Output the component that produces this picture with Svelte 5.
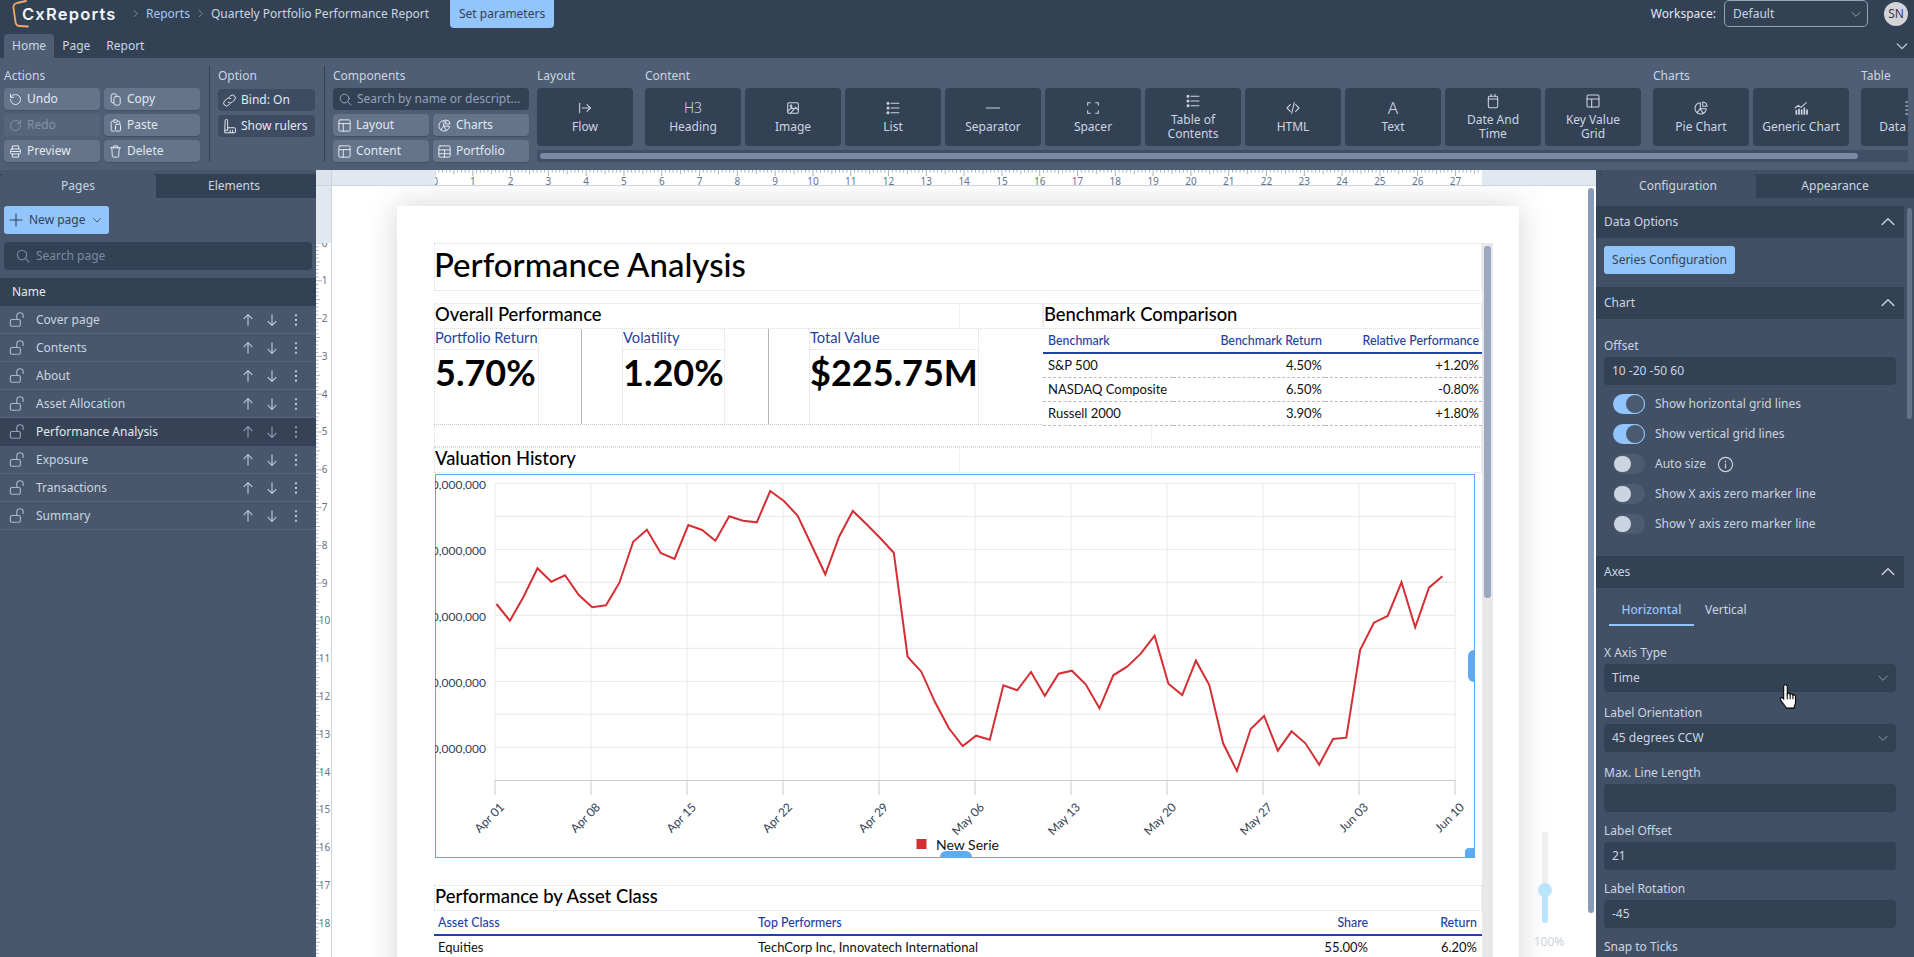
<script>
  const I = {
    undo: '<path d="M4 12a8 8 0 1 0 8-8 8.5 8.5 0 0 0-6 2.5L4 8.5"/><path d="M4 3.5v5h5"/>',
    redo: '<path d="M20 12a8 8 0 1 1-8-8 8.5 8.5 0 0 1 6 2.5l2 2"/><path d="M20 3.5v5h-5"/>',
    copy: '<rect x="9.5" y="7" width="10" height="14" rx="3"/><path d="M9.5 17.5H8a3 3 0 0 1-3-3V6a3 3 0 0 1 3-3h3a3 3 0 0 1 3 3v1"/>',
    paste: '<path d="M9 5H7a2 2 0 0 0-2 2v12a2 2 0 0 0 2 2h3"/><path d="M15 5h2a2 2 0 0 1 2 2v2"/><rect x="9" y="3" width="6" height="4" rx="1"/><rect x="12" y="10" width="8" height="11" rx="2"/>',
    print: '<path d="M7 8V3h10v5"/><rect x="4" y="8" width="16" height="8" rx="2"/><path d="M4 12h16"/><path d="M7 16v5h10v-5"/>',
    trash: '<path d="M4 6h16"/><path d="M9 6V3h6v3"/><path d="M6 6l1 14a1.5 1.5 0 0 0 1.5 1h7a1.5 1.5 0 0 0 1.5-1l1-14"/>',
    link: '<path d="M10 15a4.5 4.5 0 0 0 6 0l4-4a4.5 4.5 0 0 0-6.4-6.4l-1.5 1.5"/><path d="M14 9a4.5 4.5 0 0 0-6 0l-4 4a4.5 4.5 0 0 0 6.4 6.4l1.5-1.5"/>',
    ruler: '<path d="M5 2.5a2 2 0 0 1 4 0V14h11a1.5 1.5 0 0 1 1.5 1.5V21a1 1 0 0 1-1 1H5z"/><path d="M9 14v3M13 18v4M17 18v4M5 18h4"/>',
    layout: '<rect x="3" y="3" width="18" height="18" rx="2"/><path d="M3 9h18M10 9v12"/>',
    grid: '<rect x="3" y="3" width="18" height="18" rx="2"/><path d="M3 9.5h18M3 15.5h18M12 9.5V21"/>',
    pie: '<path d="M11 4a8.5 8.5 0 1 0 9 9h-9z"/><path d="M14.5 3a7 7 0 0 1 6.5 6.500h-6.500z"/><path d="M11 13l-5 6M11 13l4 7"/>',
    flow: '<path d="M4 5v14"/><path d="M8 12h12"/><path d="M15 7l5 5-5 5"/>',
    image: '<rect x="4" y="4" width="16" height="16" rx="2"/><circle cx="9" cy="9" r="1.3"/><path d="M4 17l6-6 3 3 3-3 4 4M8 20l8-9"/>',
    list: '<path d="M9 5h12M9 12h12M9 19h12"/><circle cx="4.500" cy="5" r="1.500" fill="currentColor"/><circle cx="4.500" cy="12" r="1.500" fill="currentColor"/><circle cx="4.500" cy="19" r="1.500" fill="currentColor"/>',
    sep: '<path d="M2 12h20"/>',
    spacer: '<path d="M4 8V4h4M16 4h4v4M20 16v4h-4M8 20H4v-4"/>',
    html: '<path d="M8 7l-5 5 5 5M16 7l5 5-5 5M14 4l-4 16"/>',
    date: '<rect x="5" y="5" width="14" height="17" rx="2"/><path d="M9 2v3M15 2v3M5 9h14"/>',
    bars: '<path d="M3 12l5-4 4 3 8-7"/><path d="M5 21v-5M9 21v-7M13 21v-6M17 21v-9M21 21v-6" stroke-width="2.600"/>',
    table: '<path d="M7 3h12v18H7M7 9h12M7 15h12"/>',
    search: '<circle cx="10.500" cy="10.500" r="7"/><path d="M16 16l5 5"/>',
    plus: '<path d="M12 3v18M3 12h18"/>',
    down: '<path d="M5 9l7 7 7-7"/>',
    up: '<path d="M5 15l7-7 7 7"/>',
    aup: '<path d="M12 20V4M6 10l6-6 6 6"/>',
    adown: '<path d="M12 4v16M6 14l6 6 6-6"/>',
    more: '<circle cx="12" cy="5" r=".9" fill="currentColor"/><circle cx="12" cy="12" r=".9" fill="currentColor"/><circle cx="12" cy="19" r=".9" fill="currentColor"/>',
    lock: '<rect x="2" y="12" width="14" height="9.500" rx="2"/><path d="M11 12V7a4.500 4.500 0 0 1 9 0v2"/>',
    info: '<circle cx="12" cy="12" r="10"/><path d="M12 11v6M12 7v1.200"/>',
    chev: '<path d="M9 5l7 7-7 7"/>'
  };

  const actions = [
    ['Undo', 'undo', false], ['Copy', 'copy', false],
    ['Redo', 'redo', true], ['Paste', 'paste', false],
    ['Preview', 'print', false], ['Delete', 'trash', false]
  ];
  const comps = [['Layout', 'layout'], ['Charts', 'pie'], ['Content', 'layout'], ['Portfolio', 'grid']];
  const content = [
    ['Heading', 'H3'], ['Image', 'image'], ['List', 'list'], ['Separator', 'sep'], ['Spacer', 'spacer'],
    ['Table of\nContents', 'list'], ['HTML', 'html'], ['Text', 'A'], ['Date And\nTime', 'date'], ['Key Value\nGrid', 'layout']
  ];
  const pages = ['Cover page', 'Contents', 'About', 'Asset Allocation', 'Performance Analysis', 'Exposure', 'Transactions', 'Summary'];
  const toggles = [
    ['Show horizontal grid lines', true], ['Show vertical grid lines', true], ['Auto size', false, true],
    ['Show X axis zero marker line', false], ['Show Y axis zero marker line', false]
  ];

  const rawA = [[200,402],[235,452],[270,382],[307,295],[343,335],[379,316],[415,375],[450,412],[486,406],[521,338],[557,215],[593,179],[629,249],[665,267],[701,165],[737,180],[772,212],[808,139],[844,152],[880,157],[915,63],[951,93],[987,137],[1023,225],[1059,313],[1095,200],[1131,123],[1167,163],[1203,205],[1238,248],[1274,560],[1310,605],[1346,697],[1382,775],[1418,828],[1453,797],[1489,809]];
  const rawB = [[9,646],[45,661],[81,606],[117,677],[153,611],[188,602],[224,643],[260,715],[296,616],[332,590],[368,551],[404,497],[440,641],[476,675],[512,572],[547,645],[583,820],[619,903],[655,777],[690,738],[726,842],[762,784],[798,820],[834,884],[870,807],[905,803],[941,540],[977,458],[1013,438],[1049,337],[1085,472],[1121,353],[1156,319]];
  const line = [
    ...rawA.map(([x, y]) => [420 + x / 2.613, 470 + y / 3]),
    ...rawB.map(([x, y]) => [1000 + x / 2.613, 470 + y / 3])
  ].map(([x, y]) => x.toFixed(1) + ',' + y.toFixed(1)).join(' ');

  const hGrid = Array.from({ length: 9 }, (_, i) => 483.3 + i * 33);
  const xLabels = ['Apr 01','Apr 08','Apr 15','Apr 22','Apr 29','May 06','May 13','May 20','May 27','Jun 03','Jun 10'];
  const yLabels = ['240,000,000','230,000,000','220,000,000','210,000,000','200,000,000'];

  const cm = 37.795;
  const hTicks = Array.from({ length: 277 }, (_, i) => i);
  const vTicks = Array.from({ length: 190 }, (_, i) => i);
  const hNums = Array.from({ length: 28 }, (_, i) => i);
  const vNums = Array.from({ length: 19 }, (_, i) => i);
  const tl = (i) => (i % 10 === 0 ? 6 : i % 5 === 0 ? 4 : 2.500);

  const bench = [['S&P 500', '4.50%', '+1.20%'], ['NASDAQ Composite', '6.50%', '-0.80%'], ['Russell 2000', '3.90%', '+1.80%']];
</script>

{#snippet icon(n, s = 16)}
  <svg class="ic" width={s} height={s} viewBox="0 0 24 24" fill="none" stroke="currentColor" stroke-width="1.600" stroke-linecap="round" stroke-linejoin="round">{@html I[n]}</svg>
{/snippet}

{#snippet bigbtn(label, ic)}
  <div class="big">
    {#if ic === 'H3'}
      <span class="gl">H3</span>
    {:else if ic === 'A'}
      <span class="gl a">A</span>
    {:else}
      {@render icon(ic, 16)}
    {/if}
    <span class="biglabel">{label}</span>
  </div>
{/snippet}

<div class="app">
  <header class="top">
    <div class="logo">
      <svg width="20" height="30" viewBox="0 0 20 30" fill="none"><path d="M14 1 L5 3 Q1 4 1.500 8 L3.500 22 Q4 26 8 26 L16 26.500" stroke="#f0a868" stroke-width="1.800" stroke-linecap="round"/></svg>
      <span class="logotext">CxReports</span>
    </div>
    <span class="crumbsep s1">{@render icon('chev', 11)}</span>
    <span class="crumb link">Reports</span>
    <span class="crumbsep">{@render icon('chev', 11)}</span>
    <span class="crumb">Quartely Portfolio Performance Report</span>
    <button class="setp">Set parameters</button>
    <div class="topright">
      <span class="ws">Workspace:</span>
      <div class="wsel"><span>Default</span>{@render icon('down', 14)}</div>
      <div class="avatar">SN</div>
    </div>
  </header>

  <nav class="tabs">
    <span class="tab on">Home</span>
    <span class="tab">Page</span>
    <span class="tab">Report</span>
    <span class="collapse">{@render icon('down', 16)}</span>
  </nav>

  <section class="ribbon">
    <div class="grp actions">
      <div class="glabel">Actions</div>
      <div class="g2">
        {#each actions as [l, ic, dis]}
          <div class="sbtn" class:dis>{@render icon(ic, 15)}<span>{l}</span></div>
        {/each}
      </div>
    </div>
    <div class="vsep"></div>
    <div class="grp option">
      <div class="glabel">Option</div>
      <div class="optcol">
        <div class="obtn">{@render icon('link', 15)}<span>Bind: On</span></div>
        <div class="obtn">{@render icon('ruler', 15)}<span>Show rulers</span></div>
      </div>
    </div>
    <div class="vsep"></div>
    <div class="grp comps">
      <div class="glabel">Components</div>
      <div class="rsearch">{@render icon('search', 15)}<span>Search by name or descript...</span></div>
      <div class="g2 compg">
        {#each comps as [l, ic]}
          <div class="sbtn">{@render icon(ic, 15)}<span>{l}</span></div>
        {/each}
      </div>
    </div>
    <div class="scroller">
      <div class="groups">
        <div class="grp">
          <div class="glabel">Layout</div>
          {@render bigbtn('Flow', 'flow')}
        </div>
        <div class="grp">
          <div class="glabel">Content</div>
          <div class="bigs">
            {#each content as [l, ic]}
              {@render bigbtn(l, ic)}
            {/each}
          </div>
        </div>
        <div class="grp">
          <div class="glabel">Charts</div>
          <div class="bigs">
            {@render bigbtn('Pie Chart', 'pie')}
            {@render bigbtn('Generic Chart', 'bars')}
          </div>
        </div>
        <div class="grp">
          <div class="glabel">Table</div>
          {@render bigbtn('Data Table', 'table')}
        </div>
      </div>
      <div class="rscroll"><div class="rthumb"></div></div>
    </div>
  </section>

  <div class="main">
    <aside class="left">
      <div class="ptabs">
        <span class="ptab on">Pages</span>
        <span class="ptab">Elements</span>
      </div>
      <div class="lbody">
        <button class="newp">{@render icon('plus', 16)}<span>New page</span>{@render icon('down', 12)}</button>
        <div class="lsearch">{@render icon('search', 16)}<span>Search page</span></div>
      </div>
      <div class="nameh">Name</div>
      {#each pages as p}
        <div class="prow" class:sel={p === 'Performance Analysis'}>
          <span class="lk">{@render icon('lock', 17)}</span>
          <span class="pname">{p}</span>
          <span class="pact">{@render icon('aup', 16)}</span>
          <span class="pact">{@render icon('adown', 16)}</span>
          <span class="pact">{@render icon('more', 16)}</span>
        </div>
      {/each}
    </aside>

    <div class="center">
      <div class="hruler">
        <div class="corner"></div>
        <div class="hgap"></div>
        <svg class="hr" width="1047" height="15" viewBox="0 0 1047 15">
          {#each hTicks as i}
            <line x1={i * cm / 10} x2={i * cm / 10} y1="0" y2={tl(i)} stroke="#aab2bf" />
          {/each}
          {#each hNums as n}
            <text x={n * cm} y="14.500" class="rn" text-anchor="middle">{n}</text>
          {/each}
        </svg>
      </div>
      <div class="cbody">
        <div class="vruler">
          <div class="vgap"></div>
          <svg class="vr" width="15" height="714" viewBox="0 0 15 714">
            {#each vTicks as i}
              <line y1={i * cm / 10} y2={i * cm / 10} x1="0" x2={tl(i)} stroke="#aab2bf" />
            {/each}
            {#each vNums as n}
              <text x="8.500" y={n * cm + 3.500} class="rn" text-anchor="middle">{n}</text>
            {/each}
          </svg>
        </div>
        <div class="canvas">
          <div class="page">
            <div class="pcontent">
              <div class="blk h1"><span class="h1t">Performance Analysis</span></div>

              <div class="two">
                <div class="col-l">
                  <div class="blk h2"><span class="splitt">Overall Performance</span></div>
                  <div class="kpis">
                    <div class="kpi k1">
                      <div class="kbox"><div class="klabel">Portfolio Return</div><div class="kval">5.70%</div></div>
                    </div>
                    <div class="kpi k2">
                      <div class="kbox"><div class="klabel">Volatility</div><div class="kval">1.20%</div></div>
                    </div>
                    <div class="kpi k2">
                      <div class="kbox"><div class="klabel">Total Value</div><div class="kval">$225.75M</div></div>
                    </div>
                  </div>
                </div>
                <div class="col-r">
                  <div class="blk h2">Benchmark Comparison</div>
                  <table class="bt">
                    <colgroup><col style="width:130px"/><col style="width:152px"/><col/></colgroup>
                    <thead><tr><th>Benchmark</th><th class="r">Benchmark Return</th><th class="r">Relative Performance</th></tr></thead>
                    <tbody>
                      {#each bench as [a, b, c]}
                        <tr><td class="nw">{a}</td><td class="r">{b}</td><td class="r">{c}</td></tr>
                      {/each}
                    </tbody>
                  </table>
                </div>
              </div>

              <div class="blk spacer22"><div class="spin"></div></div>
              <div class="blk h2"><span class="splitt">Valuation History</span></div>

              <div class="chart">
                <svg class="csvg" width="1040" height="384" viewBox="435 474 1040 384">
                  {#each hGrid as y}
                    <line x1="495" x2="1455" y1={y} y2={y} stroke="#e8e8e8" stroke-width="1" />
                  {/each}
                  {#each xLabels as _, i}
                    <line x1={495 + i * 96} x2={495 + i * 96} y1="483" y2="780" stroke="#e8e8e8" />
                    <line x1={495 + i * 96} x2={495 + i * 96} y1="780" y2="795" stroke="#ccc" />
                  {/each}
                  <line x1="495" x2="1455" y1="780.500" y2="780.500" stroke="#ccc" />
                  {#each yLabels as l, i}
                    <text x="486" y={489 + i * 66} class="ct" text-anchor="end">{l}</text>
                  {/each}
                  {#each xLabels as l, i}
                    <text x={505 + i * 96} y="808" class="ct" text-anchor="end" transform="rotate(-45 {505 + i * 96} 808)">{l}</text>
                  {/each}
                  <polyline points={line} fill="none" stroke="#d32f35" stroke-width="2" stroke-linejoin="miter" />
                  <rect x="916.500" y="839" width="10" height="10" fill="#d32f35" />
                  <text x="936" y="850" class="lg">New Serie</text>
                </svg>
                <div class="hd hd-b"></div>
                <div class="hd hd-r"></div>
                <div class="hd hd-c"></div>
              </div>

              <div class="gap27"></div>
              <div class="blk h2">Performance by Asset Class</div>
              <table class="bt at">
                <colgroup><col style="width:320px"/><col style="width:517px"/><col style="width:100px"/><col/></colgroup>
                <thead><tr><th>Asset Class</th><th>Top Performers</th><th class="r">Share</th><th class="r last">Return</th></tr></thead>
                <tbody><tr><td>Equities</td><td>TechCorp Inc, Innovatech International</td><td class="r">55.00%</td><td class="r last">6.20%</td></tr></tbody>
              </table>
            </div>
            <div class="pscroll"><div class="pthumb"></div></div>
          </div>

          <div class="oscroll"></div>
          <div class="slider">
            <div class="strack"><div class="sfill"></div><div class="sknob"></div></div>
            <div class="spct">100%</div>
          </div>
        </div>
      </div>
    </div>

    <aside class="right">
      <div class="ptabs rt">
        <span class="ptab on">Configuration</span>
        <span class="ptab grow">Appearance</span>
      </div>
      <div class="rwrap">
        <div class="rcontent">
          <div class="sech"><span>Data Options</span>{@render icon('up', 20)}</div>
          <div class="secb1"><button class="series">Series Configuration</button></div>
          <div class="sech"><span>Chart</span>{@render icon('up', 20)}</div>
          <div class="secb2">
            <div class="lab first">Offset</div>
            <div class="inp">10 -20 -50 60</div>
            <div class="togs">
              {#each toggles as [l, on, info]}
                <div class="trow">
                  <span class="tg" class:on><span class="kn"></span></span>
                  <span>{l}</span>
                  {#if info}<span class="inf">{@render icon('info', 17)}</span>{/if}
                </div>
              {/each}
            </div>
          </div>
          <div class="sech"><span>Axes</span>{@render icon('up', 20)}</div>
          <div class="secb3">
            <div class="atabs"><span class="at-on">Horizontal</span><span class="at-off">Vertical</span></div>
            <div class="lab l1">X Axis Type</div>
            <div class="inp sel"><span>Time</span>{@render icon('down', 14)}</div>
            <div class="lab">Label Orientation</div>
            <div class="inp sel"><span>45 degrees CCW</span>{@render icon('down', 14)}</div>
            <div class="lab">Max. Line Length</div>
            <div class="inp"></div>
            <div class="lab t10">Label Offset</div>
            <div class="inp">21</div>
            <div class="lab t10">Label Rotation</div>
            <div class="inp">-45</div>
            <div class="lab t10">Snap to Ticks</div>
          </div>
        </div>
        <div class="rs"><div class="rsthumb"></div></div>
      </div>
    </aside>
  </div>

  <svg class="cursor" width="22" height="28" viewBox="0 0 20 26">
    <path d="M6.500 2c1.300-1 2.800 0 2.800 1.500V10c.8-1 2.400-.7 2.700.5.9-.8 2.400-.4 2.600.8 1-.6 2.400 0 2.400 1.500v4.500c0 2.500-1 3.500-1.500 6H8.500c-.6-1.800-3.700-4.500-5.300-7.500-.8-1.500.8-2.800 2-1.800L6 14.800V3.500c0-.6.200-1.200.5-1.500z" fill="#fff" stroke="#000" stroke-width="1"/>
    <path d="M9.300 10v5M12 10.500v4.500M14.600 11.300V15" stroke="#000" stroke-width="1" fill="none"/>
  </svg>
</div>

<style>
  :global(body) { margin: 0; background: #334155; }
  .app { position: relative; width: 1914px; height: 957px; overflow: hidden; background: #334155; color: #cbd5e1; font: 12px/18px "Noto Sans", sans-serif; }
  .ic { flex: none; display: block; }
  button { font: inherit; border: 0; margin: 0; }

  .top { height: 34px; display: flex; align-items: flex-start; color: #cbd5e1; }
  .logo { position: relative; width: 116px; margin-left: 12px; height: 28px; display: flex; align-items: center; }
  .logo svg { position: absolute; left: 0; top: 0; }
  .logotext { margin-left: 10px; font: 600 16.500px Inter, sans-serif; color: #f1f5f9; letter-spacing: 1.200px; white-space: nowrap; }
  .crumbsep { margin: 8px 0 0 5px; color: #94a3b8; width: 11px; }
  .crumbsep.s1 { margin-left: 2px; }
  .crumb { white-space: nowrap; margin-left: 5px; line-height: 28px; }
  .crumb.link { color: #a5c9f0; }
  .setp { margin-left: 21px; width: 104px; height: 28px; background: #93c5fd; color: #334155; border-radius: 0 0 4px 4px; padding: 0; }
  .topright { margin-left: auto; display: flex; align-items: flex-start; }
  .ws { line-height: 28px; margin-right: 8px; color: #e2e8f0; }
  .wsel { width: 144px; height: 27px; box-sizing: border-box; border: 1px solid #94a3b8; border-radius: 5px; display: flex; align-items: center; justify-content: space-between; padding: 1px 4px 0 8px; }
  .wsel .ic { color: #94a3b8; }
  .avatar { width: 24px; height: 24px; margin: 2px 6px 0 16px; border-radius: 50%; background: #d4d4d8; color: #334155; font-size: 12px; line-height: 24px; text-align: center; }

  .tabs { height: 24px; display: flex; padding-left: 4px; position: relative; }
  .tab { padding: 0 8px; line-height: 24px; }
  .tab.on { background: #4e5e75; border-radius: 4px 4px 0 0; }
  .collapse { position: absolute; right: 4px; top: 4px; color: #cbd5e1; }

  .ribbon { height: 112px; box-sizing: border-box; background: #4e5e75; display: flex; padding: 8px 0 0 4px; }
  .grp { flex: none; }
  .glabel { height: 22px; line-height: 19px; color: #cbd5e1; }
  .g2 { display: grid; grid-template-columns: 96px 96px; gap: 4px; }
  .sbtn { height: 22px; border-radius: 4px; background: #64748b; display: flex; align-items: center; gap: 4px; padding-left: 4px; color: #e2e8f0; box-shadow: 0 1px 1px rgba(0,0,0,.15); }
  .sbtn.dis { background: #566579; color: #8292a8; box-shadow: none; }
  .vsep { width: 1px; height: 96px; background: #334155; margin: 0 8px 0 9px; flex: none; }
  .option { width: 97px; }
  .optcol { margin-top: 1px; display: flex; flex-direction: column; gap: 4px; }
  .obtn { height: 22px; border-radius: 4px; background: #3d4c62; display: flex; align-items: center; gap: 4px; padding-left: 4px; color: #e2e8f0; }
  .rsearch { width: 196px; height: 22px; border-radius: 4px; background: #334155; display: flex; align-items: center; gap: 4px; padding-left: 5px; box-sizing: border-box; color: #94a3b8; margin-bottom: 4px; white-space: nowrap; overflow: hidden; }
  .comps { width: 196px; }
  .scroller { width: 1371px; margin-left: 8px; overflow: hidden; flex: none; }
  .groups { display: flex; gap: 12px; height: 80px; overflow: hidden; margin-right: -100px; }
  .bigs { display: flex; gap: 4px; }
  .big { width: 96px; height: 58px; box-sizing: border-box; background: #334155; border-radius: 4px; display: flex; flex-direction: column; align-items: center; justify-content: center; gap: 4px; padding-bottom: 1px; color: #cbd5e1; flex: none; }
  .gl { height: 16px; line-height: 16px; font-size: 14px; color: #cbd5e1; font-weight: 300; }
  .gl.a { font-size: 17px; }
  .biglabel { line-height: 14px; text-align: center; white-space: pre-line; }
  .rscroll { height: 12px; margin-top: 4px; background: #3f4f65; padding: 3px; box-sizing: border-box; }
  .rthumb { width: 1318px; height: 6px; border-radius: 3px; background: #7a8aa3; }

  .main { display: flex; height: 787px; }
  .left { width: 316px; background: #48576b; flex: none; }
  .ptabs { display: flex; margin-top: 4px; height: 24px; background: #334155; }
  .ptab { width: 156px; line-height: 24px; text-align: center; }
  .ptab.on { background: #48576b; border-radius: 4px 4px 0 0; }
  .lbody { padding: 8px 4px; }
  .newp { width: 105px; height: 28px; border-radius: 3px; background: #93c5fd; color: #334155; display: flex; align-items: center; gap: 5px; padding: 0 0 0 4px; white-space: nowrap; }
  .newp .ic:last-child { margin-left: 1px; }
  .lsearch { margin-top: 8px; height: 28px; border-radius: 4px; background: #334155; display: flex; align-items: center; gap: 5px; padding-left: 11px; color: #7c8ba1; }
  .nameh { height: 28px; background: #334155; line-height: 28px; padding-left: 12px; color: #e2e8f0; }
  .prow { height: 28px; box-sizing: border-box; border-bottom: 1px solid #55647a; display: flex; align-items: center; color: #cbd5e1; line-height: 16px; }
  .prow.sel { background: #364256; color: #e2e8f0; border-color: #364256; }
  .lk { width: 36px; padding-left: 9px; box-sizing: border-box; color: #aab7c9; }
  .pname { flex: 1; }
  .pact { width: 24px; color: #c2cedd; display: flex; justify-content: center; }
  .pact:last-child { margin-right: 8px; }

  .center { width: 1280px; flex: none; background: #fff; display: flex; flex-direction: column; }
  .hruler { height: 16px; display: flex; box-sizing: border-box; border-bottom: 1px solid #cbd5e1; flex: none; background: #e2e8f0; }
  .corner { width: 16px; background: #dde3ea; flex: none; border-right: 1px solid #cbd5e1; box-sizing: border-box; }
  .hgap { width: 103px; flex: none; }
  .hr { background: #fff; flex: none; display: block; overflow: hidden; }
  .rn { font: 10px "Noto Sans", sans-serif; fill: #64748b; }
  .cbody { flex: 1; display: flex; min-height: 0; }
  .vruler { width: 16px; box-sizing: border-box; border-right: 1px solid #cbd5e1; flex: none; }
  .vgap { height: 57px; background: #e2e8f0; }
  .vr { display: block; background: #fff; }
  .canvas { position: relative; flex: 1; overflow: hidden; padding: 20px 0 0 65px; box-sizing: border-box; }

  .page { width: 1122px; height: 1400px; background: #fff; box-shadow: 0 0 30px rgba(0,0,0,.17); box-sizing: border-box; padding: 37px 26px 0 37px; display: flex; color: #000; font-family: Lato, sans-serif; }
  .pcontent { width: 1048px; flex: none; }
  .blk { border: 1px dotted #dcdcdc; box-sizing: border-box; }
  .h1 { height: 48px; font-size: 33px; line-height: 40px; margin-bottom: 12px; font-weight: 500; }
  .h1t { margin-left: -1px; }
  .h2 { height: 26px; font-size: 18.400px; line-height: 21px; width: 100%; font-weight: 500; }
  .splitt { display: block; width: 524px; height: 24px; border-right: 1px dotted #e6e6e6; }
  .two { display: flex; height: 122px; }
  .col-l { width: 609px; flex: none; }
  .col-r { flex: 1; }
  .kpis { display: flex; height: 96px; border-bottom: 1px dotted #ccc; box-sizing: border-box; }
  .kpi { height: 95px; }
  .k1 { width: 147px; }
  .k2 { width: 187px; border-left: 1px solid #b5b5b5; padding-left: 40px; box-sizing: border-box; }
  .kbox { display: inline-block; height: 95px; border: 1px dotted #dcdcdc; border-width: 0 1px 0 1px; box-sizing: border-box; white-space: nowrap; }
  .klabel { font-size: 14.670px; line-height: 18px; color: #1e429f; border-bottom: 1px dotted #dcdcdc; height: 21px; box-sizing: border-box; }
  .kval { font-size: 36px; line-height: 36px; font-weight: 700; margin-top: 4px; }
  .bt { border-collapse: collapse; width: 100%; table-layout: fixed; font-size: 13px; }
  .bt th { height: 24px; box-sizing: border-box; padding: 0 3px 0 4px; text-align: left; font-weight: 500; font-size: 12.400px; color: #1e429f; border-bottom: 2px solid #1e40af; white-space: nowrap; }
  .bt td { height: 24px; box-sizing: border-box; padding: 0 3px 0 4px; border-bottom: 1px dashed #bbb; color: #111; }
  .col-r th:first-child, .col-r td:first-child { padding-left: 5px; }
  .bt .r { text-align: right; }
  .bt .last { padding-right: 5px; }
  .nw { white-space: nowrap; }
  .spacer22 { height: 22px; border-top: 0; }
  .spin { width: 716px; height: 21px; border-right: 1px dotted #e6e6e6; }
  .chart { position: relative; height: 384px; width: 1040px; margin: 1px 0 0 1px; border: 1px solid #60a5fa; box-sizing: border-box; }
  .csvg { position: absolute; left: -1px; top: -1px; display: block; overflow: hidden; }
  .ct { font: 12px Lato, sans-serif; fill: #334155; }
  .lg { font: 14px Lato, sans-serif; fill: #111; }
  .hd { position: absolute; background: #5cabf5; }
  .hd-b { left: 504px; bottom: -1px; width: 32px; height: 7px; border-radius: 6px 6px 0 0; }
  .hd-r { right: -1px; top: 175px; width: 7px; height: 32px; border-radius: 6px 0 0 6px; }
  .hd-c { right: -1px; bottom: -1px; width: 10px; height: 10px; border-radius: 4px 0 0 0; }
  .gap27 { height: 27px; }
  .at td { border-bottom: 0; padding-bottom: 2px; }
  .pscroll { width: 11px; margin-left: 0; background: #e8e8e8; position: relative; flex: none; height: 1200px; }
  .pthumb { position: absolute; left: 2px; top: 3px; width: 7px; height: 352px; background: #9ba8c0; border-radius: 3px; }
  .oscroll { position: absolute; right: 2px; top: 2px; width: 6px; height: 725px; background: #8b9ab5; border-radius: 3px; }
  .slider { position: absolute; left: 1193px; top: 646px; width: 40px; display: flex; flex-direction: column; align-items: center; }
  .strack { position: relative; width: 6px; height: 91px; background: #efefef; border-radius: 3px; }
  .sfill { position: absolute; left: 0; right: 0; bottom: 0; height: 33px; background: #bae6fd; border-radius: 3px; }
  .sknob { position: absolute; left: -4px; top: 51px; width: 14px; height: 14px; border-radius: 50%; background: #bae6fd; }
  .spct { margin: 10px 0 0 8px; font-size: 12px; color: #cbd5e1; font-family: "Noto Sans", sans-serif; }

  .right { width: 318px; flex: none; background: #425065; }
  .ptabs.rt { padding-left: 4px; background: linear-gradient(#425065 0 0) left / 4px 100% no-repeat, #334155; }
  .ptabs.rt .ptab.on { background: #425065; }
  .grow { flex: 1; }
  .rwrap { display: flex; padding-top: 8px; height: 747px; box-sizing: content-box; }
  .rcontent { width: 308px; flex: none; }
  .sech { height: 32px; background: #334155; display: flex; align-items: center; justify-content: space-between; padding: 0 6px 0 8px; color: #cbd5e1; }
  .secb1 { padding: 8px 8px 13px; }
  .series { width: 131px; height: 28px; border-radius: 3px; background: #93c5fd; color: #334155; padding: 0; display: block; }
  .secb2 { padding: 18px 8px 17px; }
  .secb3 { padding: 8px 8px 0; }
  .lab { height: 20px; line-height: 18px; margin-top: 12px; color: #cbd5e1; }
  .lab.first { margin-top: 0; }
  .lab.l1 { margin-top: 18px; }
  .lab.t10 { margin-top: 10px; }
  .inp { height: 28px; background: #334155; border-radius: 4px; line-height: 28px; padding: 0 6px 0 8px; display: flex; align-items: center; color: #cbd5e1; }
  .sel { justify-content: space-between; }
  .sel .ic { color: #94a3b8; }
  .togs { margin-top: 4px; padding-left: 9px; }
  .trow { height: 30px; display: flex; align-items: center; }
  .tg { width: 32px; height: 20px; border-radius: 10px; background: #4e5c72; margin-right: 10px; position: relative; flex: none; }
  .tg.on { background: #93c5fd; }
  .kn { position: absolute; left: 1px; top: 2px; width: 17px; height: 16px; border-radius: 8px; background: #cbd5e1; }
  .tg.on .kn { left: auto; right: 0; top: 0; width: 20px; height: 20px; border-radius: 50%; background: #4a5a70; box-sizing: border-box; border: 1px solid #93c5fd; }
  .inf { margin-left: 11px; color: #cbd5e1; }
  .atabs { display: flex; height: 30px; }
  .at-on { width: 85px; box-sizing: border-box; margin-left: 5px; text-align: center; line-height: 28px; color: #93c5fd; font-weight: 500; border-bottom: 2px solid #93c5fd; }
  .at-off { margin-left: 11px; line-height: 28px; color: #cbd5e1; }
  .rs { width: 5px; margin-left: 3px; }
  .rsthumb { width: 5px; height: 211px; margin-top: 2px; background: #64748b; border-radius: 3px; }

  .cursor { position: absolute; left: 1777px; top: 683px; }
</style>
